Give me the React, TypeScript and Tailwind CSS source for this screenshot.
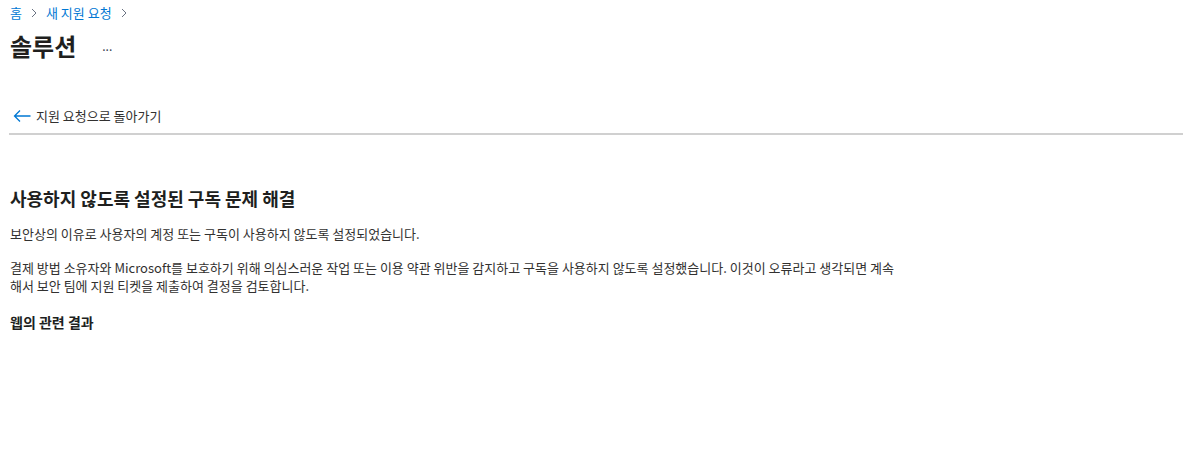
import React from 'react';

const font = { fontFamily: '"Segoe UI", "Noto Sans CJK KR", "Noto Sans", sans-serif' };

function Chevron() {
  return (
    <svg className="w-3 h-3 text-gray-500" viewBox="0 0 12 12" fill="none" stroke="currentColor" strokeWidth={1}>
      <path d="M4 2l4 4-4 4" />
    </svg>
  );
}

export default function App() {
  return (
    <div className="bg-white min-h-[451px] text-[#323130]" style={font}>
      {/* Breadcrumb */}
      <div className="flex items-center gap-1.5 pl-[10px] pt-[4px] text-[13px] leading-[18px]">
        <a className="text-[#0078d4]">홈</a>
        <Chevron />
        <a className="text-[#0078d4]">새 지원 요청</a>
        <Chevron />
      </div>

      {/* Title */}
      <div className="flex items-center pl-[10px] pt-[8px]">
        <h1 className="text-[24px] leading-[32px] font-bold text-[#201f1e]">솔루션</h1>
        <span className="ml-[26px] text-[12px] text-gray-700">...</span>
      </div>

      {/* Back link */}
      <div className="mt-[45px] pl-[13px] flex items-center gap-[5px] text-[13px] leading-[18px]">
        <svg className="w-[18px] h-[14px] text-[#0078d4]" viewBox="0 0 18 14" fill="none" stroke="currentColor" strokeWidth={1.3}>
          <path d="M17.5 7H1.5M7 1.5L1.5 7L7 12.5" />
        </svg>
        <span className="text-[#323130]">지원 요청으로 돌아가기</span>
      </div>
      <div className="ml-[9px] mt-[8px] h-[2px] bg-[#d0d0d0]" />

      {/* Content */}
      <div className="pl-[10px] pt-[50px] max-w-[900px]">
        <h2 className="text-[18px] leading-[26px] font-bold text-[#201f1e]">사용하지 않도록 설정된 구독 문제 해결</h2>
        <p className="mt-[14px] text-[13px] leading-[18px]">
          보안상의 이유로 사용자의 계정 또는 구독이 사용하지 않도록 설정되었습니다.
        </p>
        <p className="mt-[16px] text-[13px] leading-[18px]">
          결제 방법 소유자와 Microsoft를 보호하기 위해 의심스러운 작업 또는 이용 약관 위반을 감지하고 구독을 사용하지 않도록 설정했습니다. 이것이 오류라고 생각되면 계속해서 보안 팀에 지원 티켓을 제출하여 결정을 검토합니다.
        </p>
        <h3 className="mt-[17px] text-[14px] leading-[20px] font-bold text-[#201f1e]">웹의 관련 결과</h3>
      </div>
    </div>
  );
}
